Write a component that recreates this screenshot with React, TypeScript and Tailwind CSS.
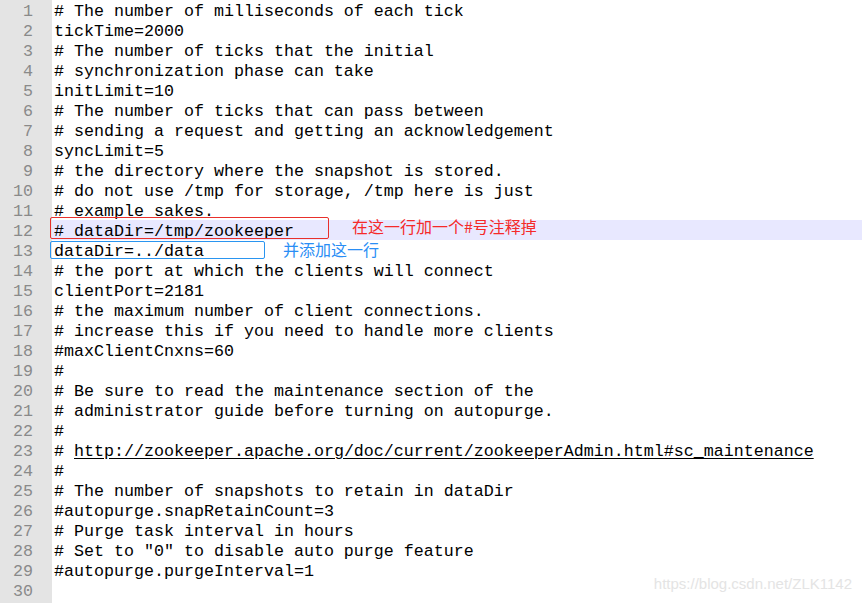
import React from 'react';

const lines: string[] = [
	'# The number of milliseconds of each tick',
	'tickTime=2000',
	'# The number of ticks that the initial',
	'# synchronization phase can take',
	'initLimit=10',
	'# The number of ticks that can pass between',
	'# sending a request and getting an acknowledgement',
	'syncLimit=5',
	'# the directory where the snapshot is stored.',
	'# do not use /tmp for storage, /tmp here is just',
	'# example sakes.',
	'# dataDir=/tmp/zookeeper',
	'dataDir=../data',
	'# the port at which the clients will connect',
	'clientPort=2181',
	'# the maximum number of client connections.',
	'# increase this if you need to handle more clients',
	'#maxClientCnxns=60',
	'#',
	'# Be sure to read the maintenance section of the',
	'# administrator guide before turning on autopurge.',
	'#',
	'LINK',
	'#',
	'# The number of snapshots to retain in dataDir',
	'#autopurge.snapRetainCount=3',
	'# Purge task interval in hours',
	'# Set to "0" to disable auto purge feature',
	'#autopurge.purgeInterval=1',
	'',
];

const mono = { fontFamily: '"Liberation Mono", "Courier New", monospace' };
const cjk = { fontFamily: '"Noto Sans CJK SC", sans-serif' };

export default function App() {
	return (
		<div className="relative w-[862px] h-[603px] bg-white overflow-hidden flex">
			<div
				className="w-[52px] shrink-0 bg-[#e4e4e4] text-[#8a8a8a] text-[16.67px] leading-5 text-right pr-[19px]"
				style={mono}
			>
				{lines.map((_, key) => (
					<div className="h-5 pt-[2px]" {...{ key }}>
						{key + 1}
					</div>
				))}
			</div>

			<div className="flex-1 text-[16.67px] text-black" style={mono}>
				{lines.map((line, key) => {
					const n = key + 1;
					return (
						<div
							className={`${n == 12 ? 'bg-[#e8e8ff]' : ''} relative flex items-start h-5 pl-[2px] whitespace-pre`}
							{...{ key }}
						>
							<span className="pt-[2px] leading-5">
								{line == 'LINK' ? (
									<>
										{'# '}
										<span className="underline underline-offset-2">
											http://zookeeper.apache.org/doc/current/zookeeperAdmin.html#sc_maintenance
										</span>
									</>
								) : (
									line
								)}
							</span>

							{n == 12 && (
								<>
									<span className="ml-[58px] -mt-[2px] text-[16px] leading-4 text-[#f52a2a]" style={cjk}>
										在这一行加一个#号注释掉
									</span>
									<div className="absolute left-[-2px] top-[-3px] w-[279px] h-[22px] border border-[#e8302c] rounded-[2px]" />
								</>
							)}
							{n == 13 && (
								<>
									<span className="ml-[79px] mt-[1px] text-[16px] leading-4 text-[#2a8ef5]" style={cjk}>
										并添加这一行
									</span>
									<div className="absolute left-[-2px] top-[1px] w-[215px] h-[18px] border border-[#2a95f0] rounded-[2px]" />
								</>
							)}
						</div>
					);
				})}
			</div>

			<div
				className="absolute right-[10px] bottom-[8px] text-[15px] text-[#e4e4e4]"
				style={{ fontFamily: '"Liberation Sans", Arial, sans-serif' }}
			>
				https://blog.csdn.net/ZLK1142
			</div>
		</div>
	);
}
